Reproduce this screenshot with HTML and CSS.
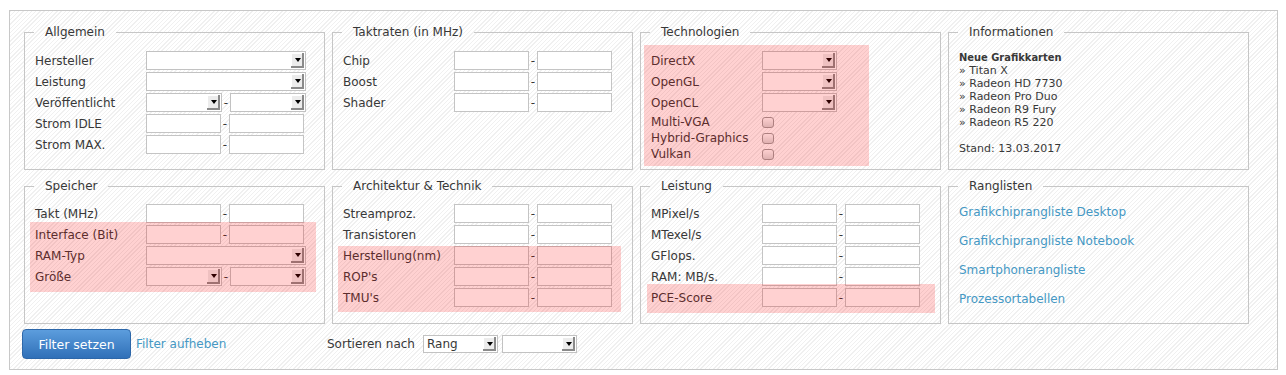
FILE: index.html
```html
<!DOCTYPE html>
<html lang="de">
<head>
  <meta charset="UTF-8" />
  <title>Grafikkarten Suche</title>
  <link rel="stylesheet" href="styles.css">
</head>
<body>

  <!-- Suchformular -->
  <form class="finder" onsubmit="return false">
    <div class="boxes">

      <fieldset class="box">
        <legend>Allgemein</legend>
        <div class="row"><label>Hersteller</label><span class="sel sel-wide"><select></select></span></div>
        <div class="row"><label>Leistung</label><span class="sel sel-wide"><select></select></span></div>
        <div class="row"><label>Veröffentlicht</label><span class="sel sel-half"><select></select></span><span class="dash">-</span><span class="sel sel-half"><select></select></span></div>
        <div class="row"><label>Strom IDLE</label><input class="num" type="text"><span class="dash">-</span><input class="num" type="text"></div>
        <div class="row"><label>Strom MAX.</label><input class="num" type="text"><span class="dash">-</span><input class="num" type="text"></div>
      </fieldset>

      <fieldset class="box">
        <legend>Taktraten (in MHz)</legend>
        <div class="row"><label>Chip</label><input class="num" type="text"><span class="dash">-</span><input class="num" type="text"></div>
        <div class="row"><label>Boost</label><input class="num" type="text"><span class="dash">-</span><input class="num" type="text"></div>
        <div class="row"><label>Shader</label><input class="num" type="text"><span class="dash">-</span><input class="num" type="text"></div>
      </fieldset>

      <fieldset class="box">
        <legend>Technologien</legend>
        <div class="hl hl-tech">
          <div class="row"><label>DirectX</label><span class="sel sel-short"><select></select></span></div>
          <div class="row"><label>OpenGL</label><span class="sel sel-short"><select></select></span></div>
          <div class="row"><label>OpenCL</label><span class="sel sel-short"><select></select></span></div>
          <div class="row chk"><label>Multi-VGA</label><input type="checkbox"></div>
          <div class="row chk"><label>Hybrid-Graphics</label><input type="checkbox"></div>
          <div class="row chk"><label>Vulkan</label><input type="checkbox"></div>
        </div>
      </fieldset>

      <fieldset class="box">
        <legend>Informationen</legend>
        <div class="info">
          <strong>Neue Grafikkarten</strong>
          <div>» Titan X</div>
          <div>» Radeon HD 7730</div>
          <div>» Radeon Pro Duo</div>
          <div>» Radeon R9 Fury</div>
          <div>» Radeon R5 220</div>
          <div class="stand">Stand: 13.03.2017</div>
        </div>
      </fieldset>

      <fieldset class="box">
        <legend>Speicher</legend>
        <div class="row"><label>Takt (MHz)</label><input class="num" type="text"><span class="dash">-</span><input class="num" type="text"></div>
        <div class="hl hl-mem">
          <div class="row"><label>Interface (Bit)</label><input class="num" type="text"><span class="dash">-</span><input class="num" type="text"></div>
          <div class="row"><label>RAM-Typ</label><span class="sel sel-wide"><select></select></span></div>
          <div class="row"><label>Größe</label><span class="sel sel-half"><select></select></span><span class="dash">-</span><span class="sel sel-half"><select></select></span></div>
        </div>
      </fieldset>

      <fieldset class="box">
        <legend>Architektur &amp; Technik</legend>
        <div class="row"><label>Streamproz.</label><input class="num" type="text"><span class="dash">-</span><input class="num" type="text"></div>
        <div class="row"><label>Transistoren</label><input class="num" type="text"><span class="dash">-</span><input class="num" type="text"></div>
        <div class="hl hl-arch">
          <div class="row"><label>Herstellung(nm)</label><input class="num" type="text"><span class="dash">-</span><input class="num" type="text"></div>
          <div class="row"><label>ROP's</label><input class="num" type="text"><span class="dash">-</span><input class="num" type="text"></div>
          <div class="row"><label>TMU's</label><input class="num" type="text"><span class="dash">-</span><input class="num" type="text"></div>
        </div>
      </fieldset>

      <fieldset class="box">
        <legend>Leistung</legend>
        <div class="row"><label>MPixel/s</label><input class="num" type="text"><span class="dash">-</span><input class="num" type="text"></div>
        <div class="row"><label>MTexel/s</label><input class="num" type="text"><span class="dash">-</span><input class="num" type="text"></div>
        <div class="row"><label>GFlops.</label><input class="num" type="text"><span class="dash">-</span><input class="num" type="text"></div>
        <div class="row"><label>RAM: MB/s.</label><input class="num" type="text"><span class="dash">-</span><input class="num" type="text"></div>
        <div class="hl hl-perf">
          <div class="row"><label>PCE-Score</label><input class="num" type="text"><span class="dash">-</span><input class="num" type="text"></div>
        </div>
      </fieldset>

      <fieldset class="box">
        <legend>Ranglisten</legend>
        <div class="links">
          <a href="#">Grafikchiprangliste Desktop</a>
          <a href="#">Grafikchiprangliste Notebook</a>
          <a href="#">Smartphonerangliste</a>
          <a href="#">Prozessortabellen</a>
        </div>
      </fieldset>

    </div>

    <div class="actions">
      <div class="buttons">
        <button class="submit-btn" type="submit">Filter setzen</button>
        <a href="#" class="reset">Filter aufheben</a>
      </div>
      <div class="sort">
        <span>Sortieren nach</span>
        <span class="sel sel-short"><select><option>Rang</option></select></span>
        <span class="sel sel-short"><select></select></span>
      </div>
    </div>
  </form>

</body>
</html>
```

FILE: styles.css
```css
body {
  margin: 0;
  background: #ffffff;
  font-family: "DejaVu Sans", Verdana, sans-serif;
  font-size: 12px;
  color: #383838;
}

.finder {
  margin: 10px 8px 0 9px;
  padding: 13px 28px 10px 14px;
  border: 1px solid #c8c8c8;
  background: repeating-linear-gradient(-45deg, #ffffff 0, #ffffff 2px, #f0f0f0 2px, #f0f0f0 3px);
}

.boxes,
.actions {
  display: grid;
  grid-template-columns: repeat(4, 301px);
  column-gap: 7px;
}

.boxes {
  grid-auto-rows: 146px;
  row-gap: 8px;
}

.box {
  margin: 0;
  min-width: 0;
  padding: 11px 10px 0;
  border: 1px solid #c6c6c6;
}

.box:nth-child(n+5) {
  padding-top: 10px;
}

.box legend {
  margin-left: -1px;
  padding: 0 11px;
  line-height: 16px;
  font-size: 12px;
}

.row {
  display: flex;
  align-items: center;
  height: 19px;
  margin-bottom: 2px;
}

.row label {
  width: 111px;
  flex-shrink: 0;
  white-space: nowrap;
}

.row.chk {
  height: 16px;
  margin-bottom: 0;
}

.dash {
  width: 8px;
  text-align: center;
}

.num {
  box-sizing: border-box;
  width: 75px;
  height: 19px;
  margin: 0;
  padding: 0 3px;
  border: 1px solid #c4c4c4;
  background: #fff;
  font: inherit;
}

/* alte Auswahlboxen mit grauem Pfeil */
.sel {
  position: relative;
  display: inline-block;
  height: 19px;
}

.sel select {
  box-sizing: border-box;
  width: 100%;
  height: 100%;
  margin: 0;
  padding: 0 18px 0 3px;
  border: 1px solid #c2c2c2;
  border-radius: 0;
  background: #fff;
  color: #383838;
  font: inherit;
  appearance: none;
  -webkit-appearance: none;
}

.sel::before {
  content: '';
  position: absolute;
  top: 2px;
  right: 2px;
  bottom: 2px;
  width: 13px;
  background: #ececec;
  box-shadow: inset -2px -2px 0 #8a8a8a, inset 1px 1px 0 #ffffff;
  pointer-events: none;
}

.sel::after {
  content: '';
  position: absolute;
  top: 7px;
  right: 5px;
  border-left: 3.5px solid transparent;
  border-right: 3.5px solid transparent;
  border-top: 4px solid #000;
  pointer-events: none;
}

.sel-wide {
  width: 160px;
}

.sel-half {
  width: 76px;
}

.sel-short {
  width: 75px;
}

input[type="checkbox"] {
  width: 12px;
  height: 11px;
  margin: 0;
  border: 1px solid #9c9c9c;
  border-radius: 3px;
  background: linear-gradient(#fdfdfd, #d9d9d9);
  appearance: none;
  -webkit-appearance: none;
}

/* rot markierte Bereiche */
.hl {
  position: relative;
  display: flow-root;
}

.hl::after {
  content: '';
  position: absolute;
  z-index: 1;
  background: rgba(255, 0, 0, 0.18);
  pointer-events: none;
}

.hl-tech::after {
  top: -6px;
  bottom: -4px;
  left: -7px;
  width: 225px;
}

.hl-mem::after {
  top: -3px;
  bottom: -4px;
  left: -5px;
  width: 286px;
}

.hl-arch::after {
  top: 0;
  bottom: -3px;
  left: -5px;
  width: 283px;
}

.hl-perf::after {
  top: -4px;
  bottom: -4px;
  left: -4px;
  width: 288px;
}

.info {
  font-size: 11px;
  line-height: 13px;
}

.info strong {
  display: block;
  font-family: "DejaVu Sans Condensed", "DejaVu Sans", sans-serif;
  font-size: 11px;
}

.info .stand {
  margin-top: 13px;
}

.links a {
  display: block;
  margin-bottom: 12px;
  line-height: 17px;
  color: #4598c4;
  text-decoration: none;
}

.actions {
  margin-top: 5px;
}

.buttons,
.sort {
  display: flex;
  align-items: center;
}

.submit-btn {
  width: 109px;
  height: 30px;
  margin-left: -2px;
  border: 1px solid #2d67a9;
  border-radius: 4px;
  background: linear-gradient(#5c9ddd, #3070b8);
  color: #fff;
  font-family: inherit;
  font-size: 12.5px;
  cursor: pointer;
}

.reset {
  margin-left: 5px;
  color: #4598c4;
  text-decoration: none;
}

.sort {
  margin-left: -5px;
}

.sort span:first-child {
  margin-right: 8px;
}

.sort .sel {
  height: 18px;
  margin-right: 4px;
}
```
